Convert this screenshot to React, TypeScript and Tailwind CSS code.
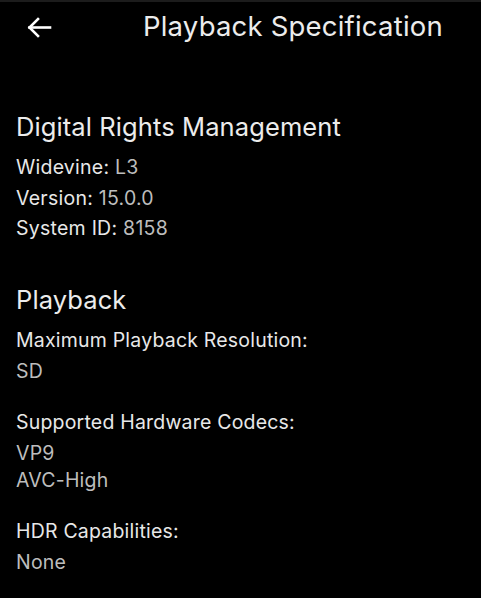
import React from 'react';

const font = { fontFamily: 'Inter, "Noto Sans", sans-serif' };

function Section({ title, children }: { title: string; children: React.ReactNode }) {
  return (
    <section className="px-4">
      <h2 className="text-[25.5px] leading-[30px] text-[#ececec] tracking-[0.1px]">{title}</h2>
      <div className="mt-[10px]">{children}</div>
    </section>
  );
}

function InfoLine({ label, value }: { label: string; value: string }) {
  return (
    <p className="text-[19.5px] leading-[30.5px] tracking-[0.25px] text-[#e8e8e8]">
      {label} <span className="text-[#bdbdbd]">{value}</span>
    </p>
  );
}

function SpecGroup({ label, values }: { label: string; values: string[] }) {
  return (
    <div className="mb-[22px]">
      <p className="text-[19.5px] leading-[31px] tracking-[0.2px] mb-[2px] text-[#e8e8e8]">{label}</p>
      {values.map((v) => (
        <p key={v} className="text-[19.5px] leading-[27px] tracking-[0.2px] text-[#bdbdbd]">
          {v}
        </p>
      ))}
    </div>
  );
}

export default function App() {
  return (
    <div className="w-[481px] h-[598px] bg-black overflow-hidden" style={font}>
      <div className="h-[2px] bg-[#1c1c1c]" />
      <header className="flex items-center h-[50px]">
        <button className="w-[80px] flex items-center pl-[27px] text-white">
          <svg width="25" height="21" viewBox="0 0 25 21" fill="none" stroke="currentColor" strokeWidth="2.6" strokeLinecap="square">
            <path d="M2.5 10.5H23" />
            <path d="M11 2L2.5 10.5L11 19" />
          </svg>
        </button>
        <h1 className="ml-[63px] text-[27.5px] text-[#ececec] tracking-[0.2px]">Playback Specification</h1>
      </header>

      <div className="mt-[60px]">
        <Section title="Digital Rights Management">
          <InfoLine label="Widevine:" value="L3" />
          <InfoLine label="Version:" value="15.0.0" />
          <InfoLine label="System ID:" value="8158" />
        </Section>
      </div>

      <div className="mt-[41px]">
        <Section title="Playback">
          <div className="mt-[1px]">
            <SpecGroup label="Maximum Playback Resolution:" values={['SD']} />
            <SpecGroup label="Supported Hardware Codecs:" values={['VP9', 'AVC-High']} />
            <SpecGroup label="HDR Capabilities:" values={['None']} />
          </div>
        </Section>
      </div>
    </div>
  );
}
